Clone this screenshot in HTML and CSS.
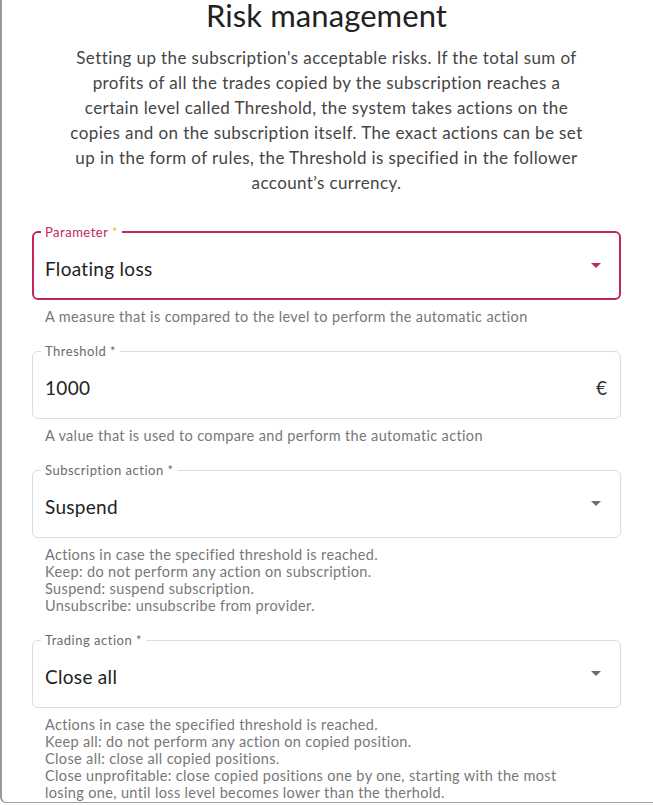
FILE: index.html
```html
<!DOCTYPE html>
<html lang="en">
<head>
<meta charset="utf-8">
<title>Risk management</title>
<link rel="stylesheet" href="styles.css">
</head>
<body>
<div class="dialog">
  <h1 class="title">Risk management</h1>
  <p class="intro">Setting up the subscription's acceptable risks. If the total sum of<br>profits of all the trades copied by the subscription reaches a<br>certain level called Threshold, the system takes actions on the<br>copies and on the subscription itself. The exact actions can be set<br>up in the form of rules, the Threshold is specified in the follower<br>account’s currency.</p>

  <div class="fields">
    <div class="field">
      <fieldset class="box box-focused">
        <legend class="label label-focused">Parameter <span class="req">*</span></legend>
        <div class="row">
          <span class="value">Floating loss</span>
          <span class="arrow arrow-focused"></span>
        </div>
      </fieldset>
      <div class="helper">A measure that is compared to the level to perform the automatic action</div>
    </div>

    <div class="field">
      <fieldset class="box">
        <legend class="label">Threshold *</legend>
        <div class="row">
          <span class="value">1000</span>
          <span class="suffix">€</span>
        </div>
      </fieldset>
      <div class="helper">A value that is used to compare and perform the automatic action</div>
    </div>

    <div class="field">
      <fieldset class="box">
        <legend class="label">Subscription action *</legend>
        <div class="row">
          <span class="value">Suspend</span>
          <span class="arrow"></span>
        </div>
      </fieldset>
      <div class="helper">Actions in case the specified threshold is reached.<br>Keep: do not perform any action on subscription.<br>Suspend: suspend subscription.<br>Unsubscribe: unsubscribe from provider.</div>
    </div>

    <div class="field">
      <fieldset class="box">
        <legend class="label">Trading action *</legend>
        <div class="row">
          <span class="value">Close all</span>
          <span class="arrow"></span>
        </div>
      </fieldset>
      <div class="helper">Actions in case the specified threshold is reached.<br>Keep all: do not perform any action on copied position.<br>Close all: close all copied positions.<br>Close unprofitable: close copied positions one by one, starting with the most<br>losing one, until loss level becomes lower than the therhold.<br>Close all unprofitable: close all copies with loss.</div>
    </div>
  </div>
</div>
</body>
</html>
```

FILE: styles.css
```css
html, body {
  margin: 0;
  padding: 0;
  background: #ffffff;
}

body {
  font-family: Lato, "Noto Sans", sans-serif;
  color: #222222;
  overflow: hidden;
}

.dialog {
  box-sizing: border-box;
  height: 803px;
  border-left: 2px solid #9a9a9a;
  border-bottom: 1px solid #a0a0a0;
  border-bottom-left-radius: 6px;
  padding: 0 32px 0 30px;
  background: #ffffff;
}

.title {
  margin: 0;
  font-size: 31px;
  line-height: 31px;
  font-weight: 400;
  letter-spacing: 0.1px;
  color: #212121;
  text-align: center;
}

.intro {
  margin: 14px 0 0;
  font-size: 17px;
  line-height: 25px;
  letter-spacing: 0.4px;
  color: #454545;
  text-align: center;
}

.fields {
  margin-top: 30px;
  display: flex;
  flex-direction: column;
  gap: 19px;
}

.box {
  margin: 0;
  min-width: 0;
  padding: 0 19px 0 8px;
  border: 1px solid #dcdcdc;
  border-radius: 6px;
}

.box-focused {
  border: 2px solid #c2255c;
  padding: 0 18px 0 7px;
}

.label {
  padding: 0 4px;
  font-size: 13px;
  line-height: 14px;
  letter-spacing: 0.5px;
  color: #6b6b6b;
}

.label-focused {
  color: #c2255c;
}

.req {
  color: #f2c230;
}

.row {
  display: flex;
  align-items: center;
  justify-content: space-between;
  padding: 18px 0 18px 4px;
}

.box-focused .row {
  padding-bottom: 17px;
}

.value {
  font-size: 19px;
  line-height: 24px;
  letter-spacing: 0.3px;
  color: #222222;
}

.suffix {
  font-size: 19px;
  line-height: 24px;
  color: #333333;
  margin-right: -6px;
}

.arrow {
  width: 0;
  height: 0;
  border-left: 5px solid transparent;
  border-right: 5px solid transparent;
  border-top: 5px solid #6e6e6e;
  margin-bottom: 8px;
}

.arrow-focused {
  border-top-color: #c2255c;
}

.helper {
  margin-top: 8px;
  padding-left: 13px;
  font-size: 14.5px;
  line-height: 17px;
  letter-spacing: 0.35px;
  color: #777777;
  white-space: nowrap;
}
```
